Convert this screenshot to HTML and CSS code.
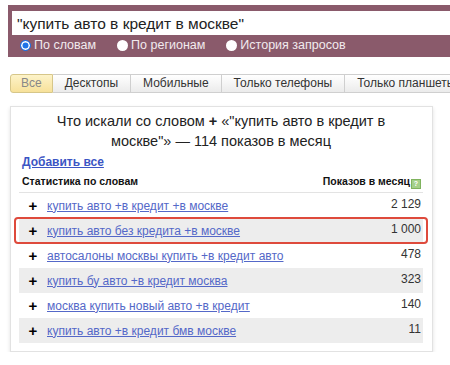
FILE: index.html
```html
<!DOCTYPE html>
<html lang="ru">
<head>
  <meta charset="UTF-8" />
  <title>Подбор слов</title>
  <link rel="stylesheet" href="styles.css">
</head>
<body>
  <div class="search">
    <div class="query">"купить авто в кредит в москве"</div>
    <div class="modes">
      <label class="mode"><span class="radio on"></span>По словам</label>
      <label class="mode"><span class="radio"></span>По регионам</label>
      <label class="mode"><span class="radio"></span>История запросов</label>
    </div>
  </div>

  <div class="tabs">
    <span class="tab active">Все</span>
    <span class="tab">Десктопы</span>
    <span class="tab">Мобильные</span>
    <span class="tab">Только телефоны</span>
    <span class="tab">Только планшеты</span>
  </div>

  <div class="card">
    <h2 class="title">Что искали со словом <b>+</b> «"купить авто в кредит в москве"» — 114 показов в месяц</h2>
    <a class="add-all" href="#">Добавить все</a>
    <div class="head">
      <span>Статистика по словам</span>
      <span>Показов в месяц<i class="help">?</i></span>
    </div>
    <div class="rows">
      <div class="row"><b class="plus">+</b><a href="#">купить авто +в кредит +в москве</a><span class="num">2 129</span></div>
      <div class="row odd marked"><b class="plus">+</b><a href="#">купить авто без кредита +в москве</a><span class="num">1 000</span></div>
      <div class="row"><b class="plus">+</b><a href="#">автосалоны москвы купить +в кредит авто</a><span class="num">478</span></div>
      <div class="row odd"><b class="plus">+</b><a href="#">купить бу авто +в кредит москва</a><span class="num">323</span></div>
      <div class="row"><b class="plus">+</b><a href="#">москва купить новый авто +в кредит</a><span class="num">140</span></div>
      <div class="row odd"><b class="plus">+</b><a href="#">купить авто +в кредит бмв москве</a><span class="num">11</span></div>
    </div>
  </div>
</body>
</html>
```

FILE: styles.css
```css
body {
  margin: 0;
  padding: 5px 0 0 8px;
  font-family: "Liberation Sans", Arial, sans-serif;
  background: #fff;
  overflow: hidden;
}

.search {
  background: #8a5a6b;
  padding: 6px 0 5px 4px;
}

.query {
  background: #fff;
  height: 24px;
  line-height: 25px;
  padding-left: 5px;
  font-size: 15.5px;
  color: #222;
}

.modes {
  display: flex;
  padding: 3px 0 0 8px;
  font-size: 12.5px;
  color: #f2eaee;
}

.mode {
  display: flex;
  align-items: center;
  gap: 3px;
  margin-right: 21px;
}

.radio {
  width: 11px;
  height: 11px;
  border-radius: 50%;
  background: #fff;
  box-sizing: border-box;
}

.radio.on {
  border: 1.5px solid #1d73e8;
  background: #1d73e8;
  box-shadow: inset 0 0 0 1.5px #fff;
}

.tabs {
  display: flex;
  margin: 17px 0 0 2px;
  white-space: nowrap;
  overflow: hidden;
}

.tab {
  font-size: 12px;
  color: #333;
  padding: 0 12px;
  height: 17px;
  line-height: 17px;
  border: 1px solid #cfcfcf;
  border-left: none;
  background: linear-gradient(#ffffff, #ebebeb);
}

.tab.active {
  color: #888;
  padding: 0 10px;
  border: 1px solid #d6c689;
  border-radius: 3px 0 0 3px;
  background: linear-gradient(#fdf3c9, #f7e19a);
}

.card {
  margin: 13px 0 0 2px;
  width: 423px;
  border: 1px solid #e2e2e2;
  box-shadow: 0 2px 4px rgba(0, 0, 0, 0.12);
  padding: 4px 9px 8px 8px;
  box-sizing: border-box;
}

.title {
  margin: 0 20px;
  font-size: 14.5px;
  font-weight: normal;
  text-align: center;
  line-height: 20px;
  color: #222;
}

.add-all {
  display: inline-block;
  margin: 4px 0 0 3px;
  font-size: 12px;
  font-weight: bold;
  color: #3b55c4;
}

.head {
  display: flex;
  justify-content: space-between;
  font-size: 10.5px;
  font-weight: bold;
  color: #111;
  margin-top: 5px;
  padding: 0 2px 3px 3px;
  border-bottom: 1px solid #e3e3e3;
}

.help {
  display: inline-block;
  width: 8px;
  height: 8px;
  margin-left: 1px;
  font-size: 7px;
  line-height: 8px;
  font-style: normal;
  text-align: center;
  color: #fff;
  background: #a4d08a;
  border: 1px solid #7fb35e;
  vertical-align: -1px;
}

.row {
  display: flex;
  align-items: center;
  height: 25px;
  font-size: 12px;
  position: relative;
}

.row.odd {
  background: #ededed;
}

.row.marked::after {
  content: "";
  position: absolute;
  left: -5px;
  right: -5px;
  top: -1px;
  bottom: -1px;
  border: 2px solid #de4a3c;
  border-radius: 4px;
}

.plus {
  width: 28px;
  text-align: center;
  font-size: 15px;
  color: #000;
}

.row a {
  color: #5468c8;
}

.num {
  margin-left: auto;
  padding: 4px 2px 0 0;
  color: #333;
  align-self: flex-start;
}
```
